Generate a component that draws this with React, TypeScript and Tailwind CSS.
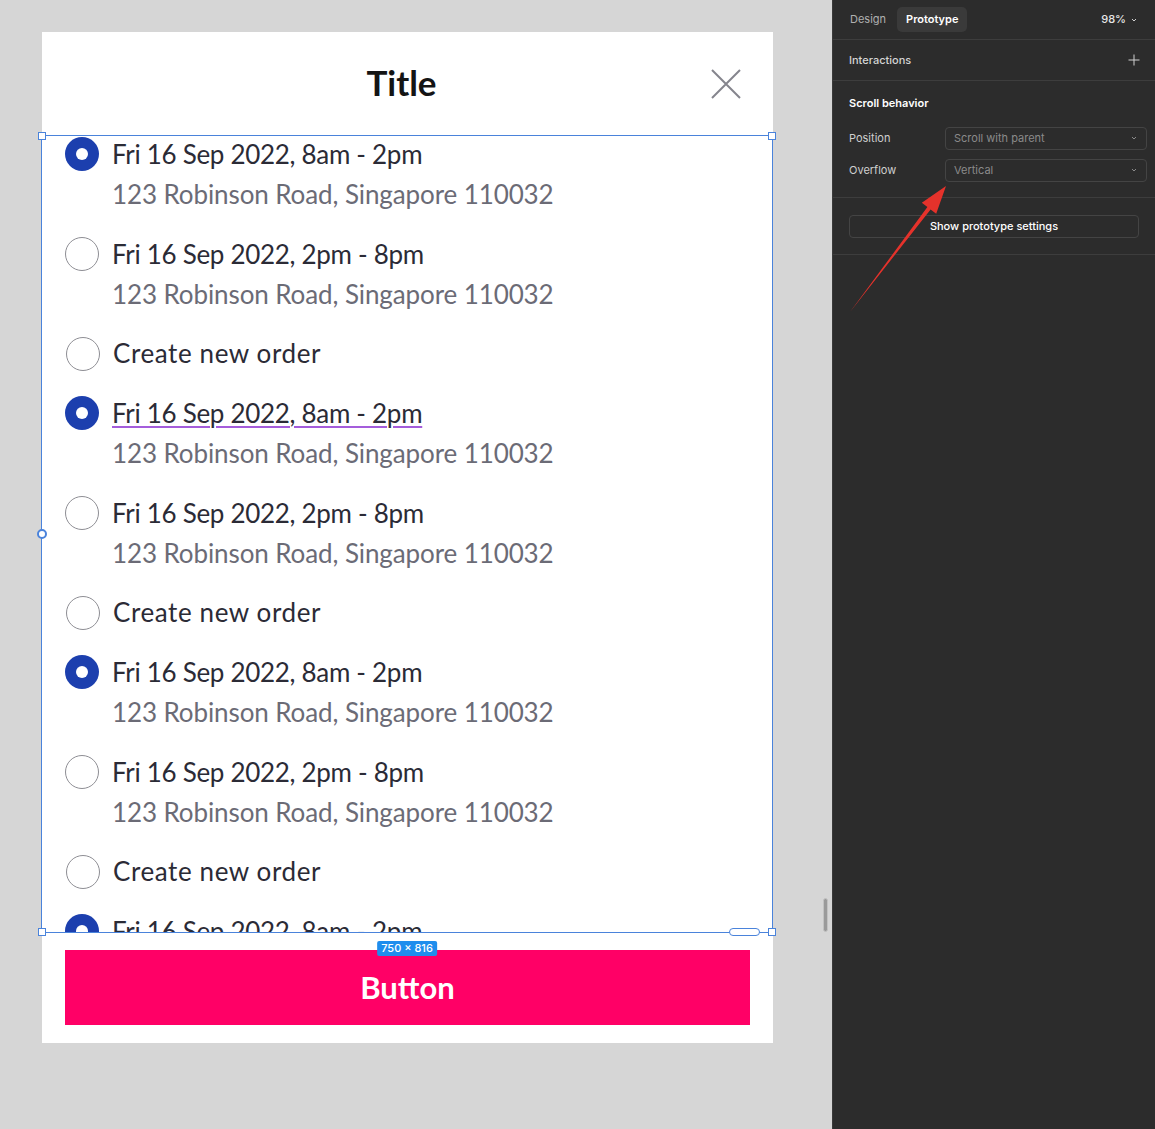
import React from "react";

type Item =
    | { kind: "slot"; time: string; address: string; selected: boolean; underline?: boolean }
    | { kind: "new" };

const slotA = { kind: "slot" as const, time: "Fri 16 Sep 2022, 8am - 2pm", address: "123 Robinson Road, Singapore 110032", selected: true };
const slotB = { kind: "slot" as const, time: "Fri 16 Sep 2022, 2pm - 8pm", address: "123 Robinson Road, Singapore 110032", selected: false };
const newOrder: Item = { kind: "new" };

// the list is taller than the frame, the last row gets clipped
const items: Item[] = [
    slotA, slotB, newOrder,
    { ...slotA, underline: true }, slotB, newOrder,
    slotA, slotB, newOrder,
    slotA, slotB, newOrder,
];

const sans = "font-['Lato','Noto_Sans',sans-serif]";
const ui = "font-['Inter','Noto_Sans',sans-serif]";

function Radio({ on }: { on: boolean }) {
    if (on) {
        return (
            <span className="flex h-[34px] w-[34px] shrink-0 items-center justify-center rounded-full bg-[#1c3fae]">
                <span className="h-[12px] w-[12px] rounded-full bg-white" />
            </span>
        );
    }
    return <span className="h-[34px] w-[34px] shrink-0 rounded-full border border-[#8e8e94] bg-white" />;
}

function Row({ item }: { item: Item }) {
    if (item.kind === "new") {
        return (
            <div className="flex items-center gap-[13px]">
                <span className="flex h-[39px] items-center pl-px">
                    <Radio on={false} />
                </span>
                <span className="text-[26px] leading-[39px] tracking-[0.6px] text-[#2b2b36]">Create new order</span>
            </div>
        );
    }
    return (
        <div className="flex gap-[13px]">
            <span className="flex h-[40px] items-center">
                <Radio on={item.selected} />
            </span>
            <div className="flex flex-col">
                <span
                    className={
                        "text-[26px] leading-[40px] tracking-[-0.3px] text-[#2b2b36] " +
                        (item.underline ? "underline decoration-[#a45ddb] decoration-2 underline-offset-[3px]" : "")
                    }
                >
                    {item.time}
                </span>
                <span className="text-[26px] leading-[40px] tracking-[-0.1px] text-[#6b6b76]">{item.address}</span>
            </div>
        </div>
    );
}

function Handle({ pos }: { pos: string }) {
    return <span className={"absolute h-[8px] w-[8px] border border-[#4a83db] bg-white " + pos} />;
}

function Select({ value }: { value: string }) {
    return (
        <div className="flex h-[23px] w-[202px] items-center justify-between rounded-[4px] border border-[#444] pl-[8px] pr-[8px] text-[11px] text-[#8a8a8a]">
            <span>{value}</span>
            <svg width="8" height="8" viewBox="0 0 8 8" className="text-[#8a8a8a]">
                <path d="M2 3l2 2 2-2" fill="none" stroke="currentColor" strokeWidth="1" />
            </svg>
        </div>
    );
}

export default function App() {
    return (
        <div className="relative flex h-[1129px] w-[1155px] overflow-hidden">
            <div className={"relative h-full w-[832px] bg-[#d6d6d6] pl-[42px] pt-[32px] " + sans}>
                <div className="flex h-[1011px] w-[731px] flex-col bg-white">
                    <div className="relative flex h-[104px] shrink-0 items-center justify-center">
                        <span className="mb-[4px] mr-[12px] text-[35px] font-bold text-[#141414]">Title</span>
                        <svg className="absolute right-[32px] top-[37px]" width="30" height="30" viewBox="0 0 30 30">
                            <path d="M1 1L29 29M29 1L1 29" stroke="#85858d" strokeWidth="2" />
                        </svg>
                    </div>
                    <div className="relative h-[796px] shrink-0">
                        <div className="h-full overflow-hidden">
                            <div className="-mt-[2px] flex flex-col gap-[20px] pl-[23px]">
                                {items.map((item, i) => (
                                    <Row key={i} item={item} />
                                ))}
                            </div>
                        </div>
                        <div className="pointer-events-none absolute -left-px -top-px bottom-[-1px] right-0 border border-[#4a83db]">
                            <Handle pos="-left-[4px] -top-[4px]" />
                            <Handle pos="-right-[4px] -top-[4px]" />
                            <Handle pos="-left-[4px] -bottom-[4px]" />
                            <Handle pos="-right-[4px] -bottom-[4px]" />
                            <span className="absolute -left-[5px] top-[393px] h-[10px] w-[10px] rounded-full border-2 border-[#4a83db] bg-white" />
                            <span className="absolute -bottom-[4px] right-[12px] h-[8px] w-[31px] rounded-full border border-[#4a83db] bg-white" />
                            <span className={"absolute left-1/2 top-full mt-[9px] -translate-x-1/2 rounded-[2px] bg-[#1f8ded] px-[4px] text-[11px] font-medium leading-[15px] text-white " + ui}>
                                750 × 816
                            </span>
                        </div>
                    </div>
                    <div className="flex-1 px-[23px] pt-[18px]">
                        <button className="flex h-[75px] w-[685px] items-center justify-center bg-[#ff0066] text-[31px] font-bold text-white">
                            Button
                        </button>
                    </div>
                </div>
                <span className="absolute left-[823px] top-[898px] h-[34px] w-[5px] rounded-full border border-[#c2c2c2] bg-[#9a9a9a]" />
            </div>

            <div className={"flex h-full flex-1 flex-col border-l border-[#3a3a3a] bg-[#2c2c2c] " + ui}>
                <div className="flex h-[40px] items-center justify-between border-b border-[#3d3d3d] pl-[9px] pr-[17px]">
                    <div className="flex items-center text-[11px]">
                        <span className="px-[8px] text-[#b0b0b0]">Design</span>
                        <span className="ml-[3px] rounded-[5px] bg-[#3a3a3a] px-[9px] py-[4px] font-semibold text-white">Prototype</span>
                    </div>
                    <div className="flex items-center gap-[4px] text-[11px] font-medium text-[#e6e6e6]">
                        <span>98%</span>
                        <svg width="8" height="8" viewBox="0 0 8 8">
                            <path d="M2 3l2 2 2-2" fill="none" stroke="#d0d0d0" strokeWidth="1" />
                        </svg>
                    </div>
                </div>
                <div className="flex h-[41px] items-center justify-between border-b border-[#3d3d3d] pl-[16px] pr-[15px]">
                    <span className="text-[11px] font-medium text-[#d4d4d4]">Interactions</span>
                    <svg width="12" height="12" viewBox="0 0 12 12">
                        <path d="M6 0.5v11M0.5 6h11" stroke="#d0d0d0" strokeWidth="1" />
                    </svg>
                </div>
                <div className="flex flex-col border-b border-[#3d3d3d] pb-[15px] pl-[16px] pr-[8px] pt-[14px]">
                    <span className="text-[11px] font-semibold text-white">Scroll behavior</span>
                    <div className="mt-[15px] flex items-center justify-between">
                        <span className="text-[11px] text-[#cfcfcf]">Position</span>
                        <Select value="Scroll with parent" />
                    </div>
                    <div className="mt-[9px] flex items-center justify-between">
                        <span className="text-[11px] text-[#cfcfcf]">Overflow</span>
                        <Select value="Vertical" />
                    </div>
                </div>
                <div className="border-b border-[#3d3d3d] pb-[16px] pl-[16px] pr-[16px] pt-[17px]">
                    <div className="flex h-[23px] items-center justify-center rounded-[4px] border border-[#444] text-[11px] font-medium text-white">
                        Show prototype settings
                    </div>
                </div>
            </div>

            <svg className="pointer-events-none absolute left-[845px] top-[180px]" width="110" height="140" viewBox="0 0 110 140">
                <polygon points="5,132 82.4,27.1 76.8,22.8 101,6 91.2,33.8 85.6,29.5" fill="#e5322b" />
            </svg>
        </div>
    );
}
